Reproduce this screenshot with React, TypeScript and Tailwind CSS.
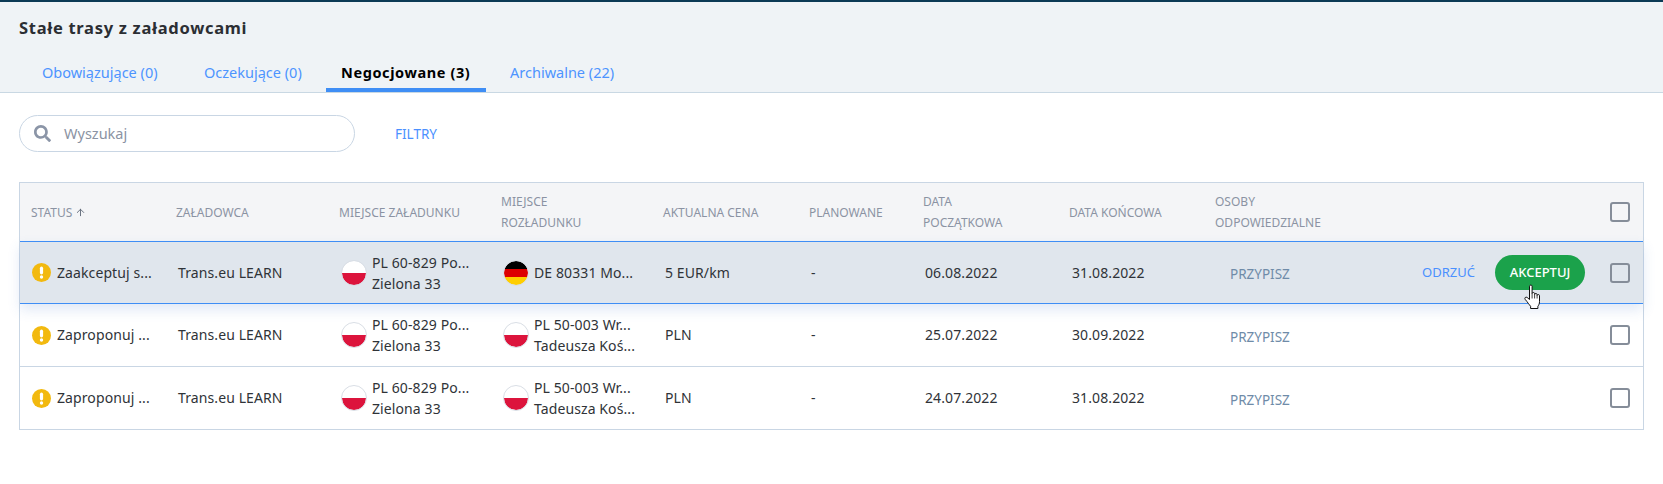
import { ArrowUp } from "lucide-react";
import { FaSearch } from "react-icons/fa";

type Row = {
  status: string;
  from: string[];
  to: string[];
  toFlag: "pl" | "de";
  price: string;
  start: string;
  end: string;
  active?: boolean;
};

const ROWS: Row[] = [
  {
    status: "Zaakceptuj s...",
    from: ["PL 60-829 Po...", "Zielona 33"],
    to: ["DE 80331 Mo..."],
    toFlag: "de",
    price: "5 EUR/km",
    start: "06.08.2022",
    end: "31.08.2022",
    active: true,
  },
  {
    status: "Zaproponuj ...",
    from: ["PL 60-829 Po...", "Zielona 33"],
    to: ["PL 50-003 Wr...", "Tadeusza Koś..."],
    toFlag: "pl",
    price: "PLN",
    start: "25.07.2022",
    end: "30.09.2022",
  },
  {
    status: "Zaproponuj ...",
    from: ["PL 60-829 Po...", "Zielona 33"],
    to: ["PL 50-003 Wr...", "Tadeusza Koś..."],
    toFlag: "pl",
    price: "PLN",
    start: "24.07.2022",
    end: "31.08.2022",
  },
];

function Flag({ code }: { code: "pl" | "de" }) {
  return (
    <svg width="26" height="26" viewBox="0 0 26 26" className="shrink-0">
      <defs>
        <clipPath id="flag-clip">
          <circle cx="13" cy="13" r="12" />
        </clipPath>
      </defs>
      {code === "pl" ? (
        <g clipPath="url(#flag-clip)">
          <rect width="26" height="13" fill="#ffffff" />
          <rect y="13" width="26" height="13" fill="#dc143c" />
        </g>
      ) : (
        <g clipPath="url(#flag-clip)">
          <rect width="26" height="9" fill="#000000" />
          <rect y="9" width="26" height="8" fill="#dd0000" />
          <rect y="17" width="26" height="9" fill="#ffce00" />
        </g>
      )}
      <circle cx="13" cy="13" r="12.5" fill="none" stroke="#d9dee5" />
    </svg>
  );
}

function Warn() {
  return (
    <svg width="19" height="19" viewBox="0 0 19 19" className="shrink-0">
      <circle cx="9.5" cy="9.5" r="9.5" fill="#f2b90f" />
      <rect x="7.9" y="3.6" width="3.2" height="7.8" rx="1.6" fill="#ffffff" />
      <circle cx="9.5" cy="14" r="1.7" fill="#ffffff" />
    </svg>
  );
}

function HandCursor() {
  return (
    <svg
      width="20"
      height="26"
      viewBox="0 0 20 26"
      className="absolute left-[28px] top-[29px]"
    >
      <path
        d="M6.5 2.2c0-1.5 2.6-1.5 2.6 0v7.3c0-1.3 2.5-1.3 2.5 0v1c0-1.3 2.5-1.3 2.5 0v1c0-1.2 2.4-1.2 2.4 0v6.2c0 2-.7 3.3-1.6 4.6v2.2H7.6v-2.2c-1.6-1.9-3-4-5.4-6.9-1.1-1.4.6-3 2-1.9l2.3 2z"
        fill="#ffffff"
        stroke="#111111"
        strokeWidth="1"
        strokeLinejoin="round"
      />
      <path d="M9.1 9.5v5M11.6 10.5v4M14.1 11.5v3" stroke="#111111" strokeWidth="0.8" />
    </svg>
  );
}

function Checkbox() {
  return <span className="block w-5 h-5 rounded-[3px] border-2 border-[#858d99] bg-transparent" />;
}

function HeadCell({ className, children }: { className: string; children: React.ReactNode }) {
  return <div className={`${className} text-xs leading-[21px] text-[#8b93a3]`}>{children}</div>;
}

function TableRow({ row, last }: { row: Row; last: boolean }) {
  return (
    <div
      className={
        row.active
          ? "relative z-10 flex items-center h-[63px] bg-[#e0e6ed] border-y border-[#3f8ef5] shadow-[0_6px_12px_rgba(70,120,200,0.16)] text-sm tracking-[0.1px] text-[#2f3338]"
          : `flex items-center text-sm tracking-[0.1px] text-[#2f3338] ${last ? "h-[62px]" : "h-[63px] border-b border-[#c9d6e4]"}`
      }
    >
      <div className="w-[145px] pl-[12px] flex items-center gap-[6px]">
        <Warn />
        <span>{row.status}</span>
      </div>
      <div className="w-[163px] pl-[13px]">Trans.eu LEARN</div>
      <div className="w-[163px] pl-[13px] flex items-center gap-[5px]">
        <Flag code="pl" />
        <div className="leading-[21px]">
          {row.from.map((l) => (
            <div key={l}>{l}</div>
          ))}
        </div>
      </div>
      <div className="w-[162px] pl-[12px] flex items-center gap-[5px]">
        <Flag code={row.toFlag} />
        <div className="leading-[21px]">
          {row.to.map((l) => (
            <div key={l}>{l}</div>
          ))}
        </div>
      </div>
      <div className="w-[145px] pl-[12px]">{row.price}</div>
      <div className="w-[115px] pl-[13px]">-</div>
      <div className="w-[146px] pl-[12px]">{row.start}</div>
      <div className="w-[145px] pl-[13px]">{row.end}</div>
      <div className="w-[218px] pl-[26px] pt-[5px] text-[13.5px] tracking-normal text-[#6f8ba8]">PRZYPISZ</div>
      <div className="flex-1 flex items-center tracking-normal">
        {row.active && (
          <>
            <span className="text-[13px] text-[#4a90ff] w-[73px]">ODRZUĆ</span>
            <span className="relative w-[90px] h-[35px] rounded-full bg-[#1ba24b] flex items-center justify-center text-[13px] font-medium text-white">
              AKCEPTUJ
              <HandCursor />
            </span>
          </>
        )}
      </div>
      <div className="w-[33px] shrink-0">
        <Checkbox />
      </div>
    </div>
  );
}

export default function App() {
  return (
    <div className="w-[1663px] h-[484px] bg-white overflow-hidden font-['Noto_Sans',sans-serif]">
      <div className="h-[90px] border-t-2 border-t-[#0b3a55] bg-[#eff3f6] border-b border-b-[#c9d8e3] box-content">
        <h1 className="pl-[19px] pt-[16px] text-[16.5px] leading-[20px] font-bold tracking-[0.7px] text-[#2b2e33]">
          Stałe trasy z załadowcami
        </h1>
        <div className="flex mt-[15px] pl-[28px] h-[39px] text-[14.5px] text-[#4d94ff]">
          <div className="w-[161px] pl-[14px] pt-[9px]">Obowiązujące (0)</div>
          <div className="w-[137px] pl-[15px] pt-[9px]">Oczekujące (0)</div>
          <div className="w-[160px] pl-[15px] pt-[9px] font-bold tracking-[0.6px] text-black border-b-4 border-[#3f8ef5]">
            Negocjowane (3)
          </div>
          <div className="ml-[24px] pt-[9px]">Archiwalne (22)</div>
        </div>
      </div>
      <div className="flex items-center mt-[22px] ml-[19px]">
        <div className="w-[336px] h-[37px] rounded-full border border-[#c9d6e4] flex items-center pl-[14px] gap-[13px] text-[14.5px] text-[#8b93a3]">
          <FaSearch className="w-[17px] h-[17px] text-[#8b95a7]" />
          Wyszukaj
        </div>
        <span className="ml-[40px] pt-[2px] text-[13.5px] text-[#4a90ff]">FILTRY</span>
      </div>
      <div className="mt-[30px] mx-[19px] w-[1625px] border border-[#c9d6e4]">
        <div className="flex items-center h-[58px] bg-[#f4f5f7]">
          <HeadCell className="w-[145px] pl-[11px] flex items-center gap-[3px]">
            STATUS <ArrowUp className="w-[11px] h-[11px] text-[#5f6877]" />
          </HeadCell>
          <HeadCell className="w-[163px] pl-[11px]">ZAŁADOWCA</HeadCell>
          <HeadCell className="w-[163px] pl-[11px]">MIEJSCE ZAŁADUNKU</HeadCell>
          <HeadCell className="w-[162px] pl-[10px]">
            MIEJSCE
            <br />
            ROZŁADUNKU
          </HeadCell>
          <HeadCell className="w-[145px] pl-[10px]">AKTUALNA CENA</HeadCell>
          <HeadCell className="w-[115px] pl-[11px]">PLANOWANE</HeadCell>
          <HeadCell className="w-[146px] pl-[10px]">
            DATA
            <br />
            POCZĄTKOWA
          </HeadCell>
          <HeadCell className="w-[145px] pl-[10px]">DATA KOŃCOWA</HeadCell>
          <HeadCell className="flex-1 pl-[11px]">
            OSOBY
            <br />
            ODPOWIEDZIALNE
          </HeadCell>
          <div className="w-[33px] shrink-0">
            <Checkbox />
          </div>
        </div>
        {ROWS.map((row, i) => (
          <TableRow key={i} row={row} last={i === ROWS.length - 1} />
        ))}
      </div>
    </div>
  );
}
